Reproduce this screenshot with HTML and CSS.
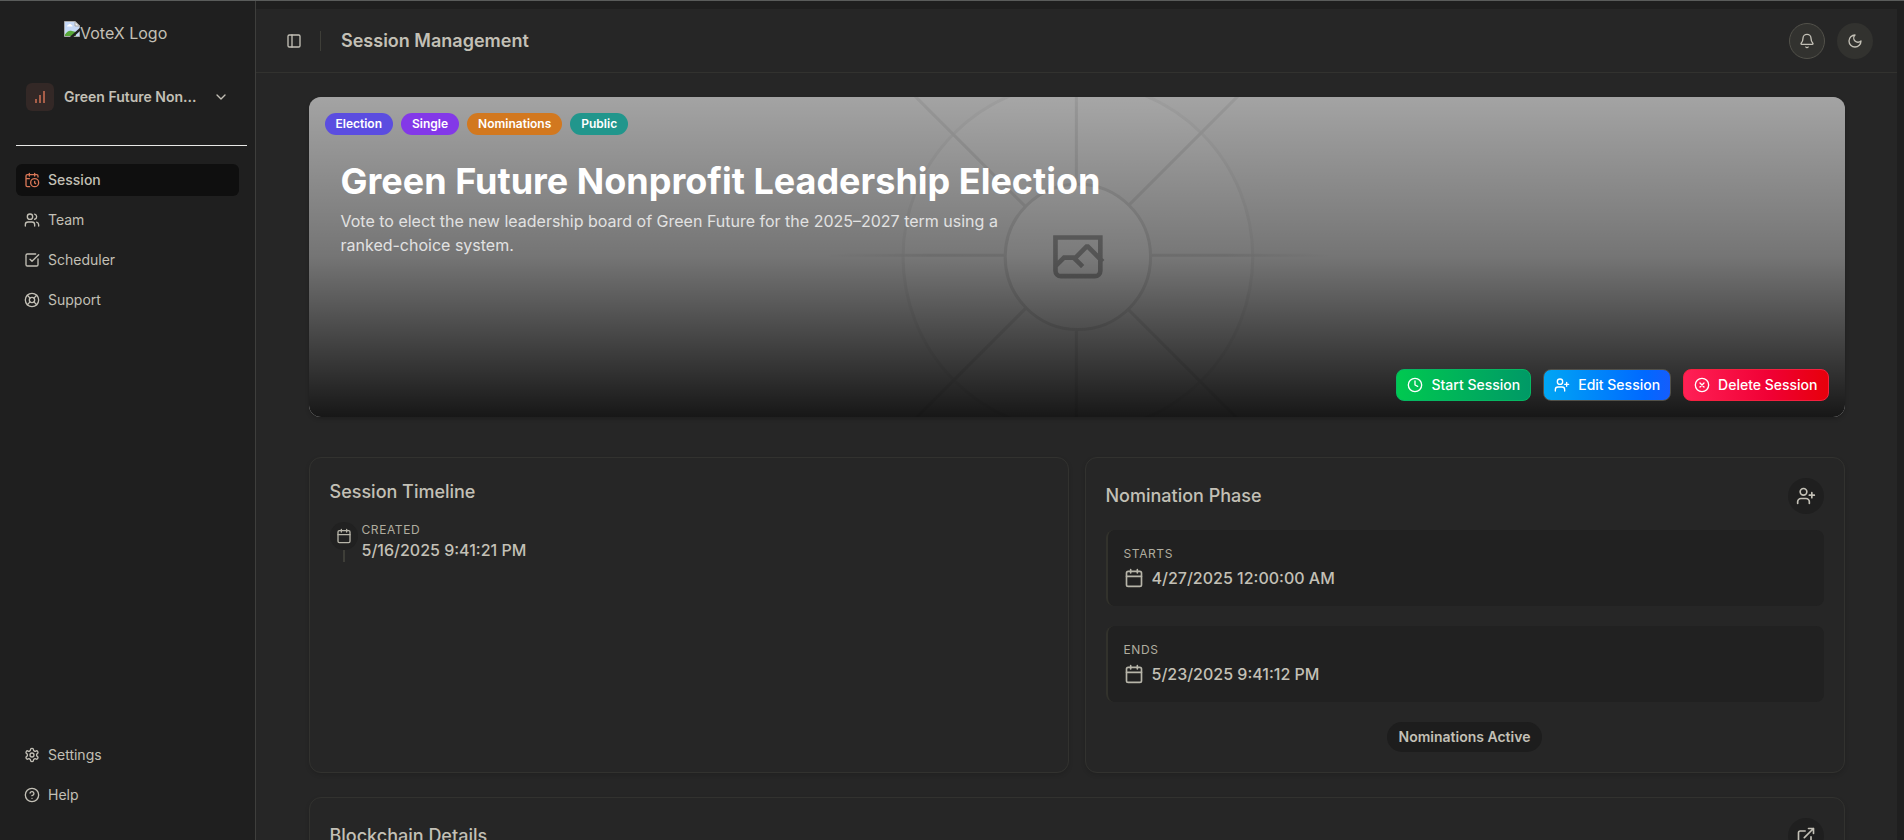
FILE: index.html
```html
<!DOCTYPE html>
<html lang="en">
<head>
<meta charset="utf-8">
<meta name="viewport" content="width=device-width, initial-scale=1">
<title>VoteX – Session Management</title>
<link rel="stylesheet" href="styles.css">
</head>
<body>
<svg class="defs" aria-hidden="true">
  <symbol id="i-calendar" viewBox="0 0 24 24"><path d="M8 2v4M16 2v4M3 10h18"/><rect x="3" y="4" width="18" height="18" rx="2"/></symbol>
  <symbol id="i-user-plus" viewBox="0 0 24 24"><path d="M16 21v-2a4 4 0 0 0-4-4H6a4 4 0 0 0-4 4v2"/><circle cx="9" cy="7" r="4"/><path d="M19 8v6M22 11h-6"/></symbol>
</svg>
<div class="shell">
  <aside class="sidebar">
    <a class="logo" href="#" aria-label="VoteX Logo">
      <svg width="16" height="16" viewBox="0 0 16 16" aria-hidden="true">
        <path fill="#c6d9f7" d="M.5.5h10.5l4.500 4.500v10.500H.5z"/>
        <path fill="#fff" d="M3 5.500a1.500 1.500 0 0 1 1.200-1.500 1.800 1.800 0 0 1 3.300 0 1.300 1.300 0 0 1 1 1.500z"/>
        <path fill="#57a639" d="M1 15v-1.500c2-3.500 4.500-4.500 7-3.500l4 1v4z"/>
        <path fill="none" stroke="#a8a8a8" d="M.5 15.500V.5h10.500l4.500 4.500v10.500z"/>
        <path fill="#f4f4f4" stroke="#a8a8a8" d="M11 .5V5h4.500z"/>
        <path stroke="#1f1f1f" stroke-width="2.500" d="M7 16.500l10-9"/>
      </svg><span>VoteX Logo</span>
    </a>
    <button class="team" type="button">
      <span class="team-icon"><svg class="icon" viewBox="0 0 24 24"><path d="M12 21V9M18 21V3M6 21v-6"/></svg></span>
      <span class="team-name">Green Future Non...</span>
      <svg class="icon" viewBox="0 0 24 24"><path d="m6 9 6 6 6-6"/></svg>
    </button>
    <hr class="rule">
    <nav class="nav" aria-label="Main">
      <a class="nav-item active" href="#"><svg class="icon" viewBox="0 0 24 24"><path d="M21 7.500V6a2 2 0 0 0-2-2H5a2 2 0 0 0-2 2v14a2 2 0 0 0 2 2h3.500M16 2v4M8 2v4M3 10h5M17.500 17.500 16 16.300V14"/><circle cx="16" cy="16" r="6"/></svg>Session</a>
      <a class="nav-item" href="#"><svg class="icon" viewBox="0 0 24 24"><path d="M16 21v-2a4 4 0 0 0-4-4H6a4 4 0 0 0-4 4v2"/><circle cx="9" cy="7" r="4"/><path d="M22 21v-2a4 4 0 0 0-3-3.870M16 3.130a4 4 0 0 1 0 7.750"/></svg>Team</a>
      <a class="nav-item" href="#"><svg class="icon" viewBox="0 0 24 24"><path d="M21 10.500V19a2 2 0 0 1-2 2H5a2 2 0 0 1-2-2V5a2 2 0 0 1 2-2h12.500M9 11l3 3L22 4"/></svg>Scheduler</a>
      <a class="nav-item" href="#"><svg class="icon" viewBox="0 0 24 24"><circle cx="12" cy="12" r="10"/><circle cx="12" cy="12" r="4"/><path d="m4.930 4.930 4.240 4.240M14.830 9.170l4.240-4.240M14.830 14.830l4.240 4.240M9.170 14.830l-4.240 4.240"/></svg>Support</a>
    </nav>
    <nav class="nav nav-bottom" aria-label="Secondary">
      <a class="nav-item" href="#"><svg class="icon" viewBox="0 0 24 24"><path d="M12.220 2h-.44a2 2 0 0 0-2 2v.18a2 2 0 0 1-1 1.730l-.43.25a2 2 0 0 1-2 0l-.15-.08a2 2 0 0 0-2.730.730l-.22.38a2 2 0 0 0 .73 2.730l.15.1a2 2 0 0 1 1 1.720v.51a2 2 0 0 1-1 1.740l-.15.09a2 2 0 0 0-.73 2.730l.22.38a2 2 0 0 0 2.730.73l.15-.08a2 2 0 0 1 2 0l.43.25a2 2 0 0 1 1 1.730V20a2 2 0 0 0 2 2h.44a2 2 0 0 0 2-2v-.18a2 2 0 0 1 1-1.730l.43-.25a2 2 0 0 1 2 0l.15.08a2 2 0 0 0 2.730-.73l.22-.39a2 2 0 0 0-.73-2.730l-.15-.08a2 2 0 0 1-1-1.740v-.5a2 2 0 0 1 1-1.740l.15-.09a2 2 0 0 0 .73-2.730l-.22-.38a2 2 0 0 0-2.730-.73l-.15.08a2 2 0 0 1-2 0l-.43-.25a2 2 0 0 1-1-1.730V4a2 2 0 0 0-2-2z"/><circle cx="12" cy="12" r="3"/></svg>Settings</a>
      <a class="nav-item" href="#"><svg class="icon" viewBox="0 0 24 24"><circle cx="12" cy="12" r="10"/><path d="M9.090 9a3 3 0 0 1 5.830 1c0 2-3 3-3 3M12 17h.01"/></svg>Help</a>
    </nav>
  </aside>

  <main class="main">
    <header class="topbar">
      <button class="trigger" type="button" aria-label="Toggle sidebar"><svg class="icon" viewBox="0 0 24 24"><rect x="3" y="3" width="18" height="18" rx="2"/><path d="M9 3v18"/></svg></button>
      <span class="divider"></span>
      <h1 class="page-title">Session Management</h1>
      <button class="round lined" type="button" aria-label="Notifications"><svg class="icon" viewBox="0 0 24 24"><path d="M10.268 21a2 2 0 0 0 3.464 0M3.262 15.326A1 1 0 0 0 4 17h16a1 1 0 0 0 .74-1.673C19.410 13.956 18 12.499 18 8A6 6 0 0 0 6 8c0 4.499-1.411 5.956-2.738 7.326"/></svg></button>
      <button class="round" type="button" aria-label="Toggle theme"><svg class="icon" viewBox="0 0 24 24"><path d="M12 3a6 6 0 0 0 9 9 9 9 0 1 1-9-9Z"/></svg></button>
    </header>

    <div class="content">
      <section class="hero">
        <svg class="hero-art" viewBox="0 0 1200 1200" preserveAspectRatio="xMidYMid slice" fill="none" aria-hidden="true">
          <defs>
            <linearGradient id="ray-h" gradientUnits="userSpaceOnUse" x1="404" y1="0" x2="797" y2="0"><stop stop-color="#c9c9c9" stop-opacity="0"/><stop offset=".208" stop-color="#c9c9c9"/><stop offset=".792" stop-color="#c9c9c9"/><stop offset="1" stop-color="#c9c9c9" stop-opacity="0"/></linearGradient>
            <linearGradient id="ray-v" gradientUnits="userSpaceOnUse" x1="0" y1="404" x2="0" y2="796"><stop stop-color="#c9c9c9" stop-opacity="0"/><stop offset=".208" stop-color="#c9c9c9"/><stop offset=".792" stop-color="#c9c9c9"/><stop offset="1" stop-color="#c9c9c9" stop-opacity="0"/></linearGradient>
          </defs>
          <rect width="1200" height="1200" fill="#eaeaea"/>
          <g opacity=".5">
            <circle cx="600.700" cy="599.900" r="136.600" fill="#fafafa" stroke="#c9c9c9" stroke-width="2.400" opacity=".5"/>
            <g stroke-width="2.400">
              <path stroke="url(#ray-h)" d="M404.800 598.700h391.700"/>
              <path stroke="url(#ray-v)" d="M599.500 795.700V404"/>
              <path stroke="url(#ray-v)" d="M795.700 796.600 404.300 405.200M404.300 795.700 795.700 404.300"/>
            </g>
            <circle cx="600.700" cy="599.900" r="56.800" fill="#fff"/>
            <path fill="#666" fill-rule="evenodd" d="M616.426 586.580h-31.434v16.176l3.553-3.554.531-.531h9.068l.074-.074 8.463-8.463h2.565l7.180 7.181V586.580Zm-15.715 14.654 3.698 3.699 1.283 1.282-2.565 2.565-1.282-1.283-5.200-5.199h-6.066l-5.514 5.514-.073.073v2.876a2.418 2.418 0 0 0 2.418 2.418h26.598a2.418 2.418 0 0 0 2.418-2.418v-8.317l-8.463-8.463-7.181 7.181-.071.072Zm-19.347 5.442v4.085a6.045 6.045 0 0 0 6.046 6.045h26.598a6.044 6.044 0 0 0 6.045-6.045v-7.108l1.356-1.355-1.282-1.283-.074-.073v-17.989h-38.689v23.430l-.146.146.146.147Z"/>
            <circle cx="600.700" cy="599.900" r="56.800" stroke="#c9c9c9" stroke-width="2.400"/>
          </g>
        </svg>
        <div class="hero-body">
          <div class="badges">
            <span class="badge indigo">Election</span>
            <span class="badge purple">Single</span>
            <span class="badge amber">Nominations</span>
            <span class="badge teal">Public</span>
          </div>
          <div class="hero-text">
            <h2>Green Future Nonprofit Leadership Election</h2>
            <p>Vote to elect the new leadership board of Green Future for the 2025–2027 term using a ranked-choice system.</p>
          </div>
          <div class="actions">
            <button class="btn start" type="button"><svg class="icon" viewBox="0 0 24 24"><circle cx="12" cy="12" r="10"/><path d="M12 6v6l4 2"/></svg>Start Session</button>
            <button class="btn edit" type="button"><svg class="icon"><use href="#i-user-plus"/></svg>Edit Session</button>
            <button class="btn delete" type="button"><svg class="icon" viewBox="0 0 24 24"><circle cx="12" cy="12" r="10"/><path d="m15 9-6 6M9 9l6 6"/></svg>Delete Session</button>
          </div>
        </div>
      </section>

      <div class="grid">
        <section class="card">
          <h3>Session Timeline</h3>
          <div class="event">
            <div class="marker">
              <span class="dot"><svg class="icon"><use href="#i-calendar"/></svg></span>
              <span class="stem"></span>
            </div>
            <div class="event-text">
              <div class="label">Created</div>
              <div class="date">5/16/2025 9:41:21 PM</div>
            </div>
          </div>
        </section>
        <section class="card">
          <div class="card-head">
            <h3>Nomination Phase</h3>
            <button class="round dark" type="button" aria-label="Add nominee"><svg class="icon large"><use href="#i-user-plus"/></svg></button>
          </div>
          <div class="phases">
            <div class="phase">
              <div class="label">Starts</div>
              <div class="date"><svg class="icon large"><use href="#i-calendar"/></svg>4/27/2025 12:00:00 AM</div>
            </div>
            <div class="phase">
              <div class="label">Ends</div>
              <div class="date"><svg class="icon large"><use href="#i-calendar"/></svg>5/23/2025 9:41:12 PM</div>
            </div>
            <span class="status">Nominations Active</span>
          </div>
        </section>
      </div>

      <section class="card">
        <div class="card-head">
          <h3>Blockchain Details</h3>
          <button class="round dark" type="button" aria-label="Open in explorer"><svg class="icon large" viewBox="0 0 24 24"><path d="M15 3h6v6M10 14 21 3M18 13v6a2 2 0 0 1-2 2H5a2 2 0 0 1-2-2V8a2 2 0 0 1 2-2h6"/></svg></button>
        </div>
      </section>
    </div>
  </main>
</div>
</body>
</html>
```

FILE: styles.css
```css
* { box-sizing: border-box; }

body {
  margin: 0;
  background: #1f1f1f;
  color: #c3c0b6;
  font: 14px/20px Inter, "Liberation Sans", sans-serif;
}

h1, h2, h3, p { margin: 0; }
button { font: inherit; color: inherit; border: 0; background: none; padding: 0; }
a { color: inherit; text-decoration: none; }

.defs { display: none; }

.icon {
  width: 16px;
  height: 16px;
  flex: none;
  fill: none;
  stroke: currentColor;
  stroke-width: 2;
  stroke-linecap: round;
  stroke-linejoin: round;
}
.icon.large { width: 20px; height: 20px; }

.shell {
  display: flex;
  height: 100vh;
  overflow: hidden;
  border-top: 1px solid #5a5c5b;
}

/* Sidebar */
.sidebar {
  display: flex;
  flex-direction: column;
  width: 256px;
  flex: none;
  padding: 20px 8px 29px 16px;
  border-right: 1px solid #3e3e3c;
}

.logo {
  display: flex;
  margin-left: 48px;
  font-size: 16px;
  line-height: 24px;
}

.team {
  display: flex;
  align-items: center;
  gap: 10px;
  margin: 38px 18px 34px 10px;
  text-align: left;
  font-weight: 600;
}
.team-icon {
  display: grid;
  place-items: center;
  width: 28px;
  height: 28px;
  border-radius: 6px;
  background: #332826;
  color: #a85e48;
}
.team-icon .icon { stroke-width: 3; stroke-linecap: butt; }
.team-name {
  flex: 1;
  white-space: nowrap;
}

.rule {
  width: 100%;
  margin: 0 0 18px;
  border: 0;
  border-top: 1px solid #e8e8e6;
}

.nav { display: flex; flex-direction: column; gap: 8px; margin-right: 8px; }
.nav-bottom { margin-top: auto; }
.nav-item {
  display: flex;
  align-items: center;
  gap: 8px;
  height: 32px;
  padding: 0 8px;
  border-radius: 6px;
}
.nav-item.active { background: #0f0f0f; font-weight: 500; }
.nav-item.active .icon { color: #d97757; }

/* Main */
.main {
  flex: 1;
  min-width: 0;
  margin: 8px 7px 0 0;
  background: #262626;
  overflow: hidden;
}

.topbar {
  display: flex;
  align-items: center;
  gap: 12px;
  height: 64px;
  padding: 0 24px;
  border-bottom: 1px solid #32322f;
}
.trigger { display: grid; place-items: center; width: 28px; height: 28px; }
.divider { width: 1px; height: 20px; background: #3e3e38; }
.page-title {
  flex: 1;
  padding-left: 8px;
  font-size: 18px;
  line-height: 28px;
  font-weight: 600;
}

.round {
  display: grid;
  place-items: center;
  flex: none;
  width: 36px;
  height: 36px;
  border-radius: 50%;
  background: #32322f;
}
.round.lined { border: 1px solid #52514a; }
.round.dark { background: #1f1f1f; }

.content {
  display: flex;
  flex-direction: column;
  gap: 24px;
  max-width: 1536px;
  margin: 24px auto;
}

/* Hero */
.hero {
  display: grid;
  min-height: 320px;
  margin-bottom: 16px;
  border-radius: 12px;
  overflow: hidden;
  box-shadow: 0 2px 4px #0003;
}
.hero > * { grid-area: 1 / 1; }
.hero-art { width: 100%; height: 100%; min-height: 0; contain: size; }
.hero-body {
  position: relative;
  display: flex;
  flex-direction: column;
  padding: 16px;
  background: linear-gradient(to top, #000000e6, #00000080, #0000004d);
}

.badges { display: flex; gap: 8px; }
.badge {
  padding: 3px 11px;
  border-radius: 11px;
  color: #fff;
  font-size: 12px;
  line-height: 16px;
  font-weight: 600;
}
.indigo { background: #5b4de0; }
.purple { background: #8338e8; }
.amber { background: #d2781f; }
.teal { background: #21968c; }

.hero-text { padding: 26px 16px 0; color: #fff; }
.hero-text h2 { font-size: 36px; line-height: 40px; font-weight: 700; }
.hero-text p {
  max-width: 672px;
  margin-top: 8px;
  color: #e2e2e2;
  font-size: 16px;
  line-height: 24px;
}

.actions { display: flex; justify-content: flex-end; gap: 12px; margin-top: auto; }
.btn {
  display: flex;
  align-items: center;
  gap: 8px;
  height: 32px;
  padding: 0 10px;
  border: 1px solid;
  border-radius: 8px;
  color: #fff;
  font-weight: 500;
}
.start { background: linear-gradient(to right, #00c950, #009966); border-color: #06b762; }
.edit { background: linear-gradient(to right, #00a6f4, #0069ff 80%, #155dfc); border-color: #52514a; }
.delete { background: linear-gradient(to right, #ff2056, #f00034 60%, #e7000b); border-color: #f5203f; }

/* Cards */
.grid { display: grid; grid-template-columns: 1fr 1fr; gap: 16px; }
.card {
  padding: 20px;
  border: 1px solid #32322f;
  border-radius: 12px;
  box-shadow: 0 2px 4px #0002;
}
.card h3 { font-size: 18px; line-height: 28px; font-weight: 500; }
.card-head { display: flex; align-items: center; justify-content: space-between; }

.label {
  color: #b0ad9f;
  font-size: 12px;
  line-height: 16px;
  letter-spacing: 0.6px;
  text-transform: uppercase;
}
.date {
  display: flex;
  align-items: center;
  gap: 8px;
  font-size: 16px;
  line-height: 24px;
  font-weight: 500;
}
.date .icon, .dot .icon { color: #b7b5a9; }

.event { display: flex; gap: 4px; margin-top: 16px; }
.marker { display: flex; flex-direction: column; align-items: center; }
.dot {
  display: grid;
  place-items: center;
  width: 28px;
  height: 28px;
  border-radius: 50%;
  background: #212121;
}
.stem { width: 2px; height: 12px; background: #3e3e38; }

.phases { display: flex; flex-direction: column; gap: 20px; margin-top: 16px; }
.phase {
  padding: 16px;
  border-left: 2px solid #32322c;
  border-radius: 8px;
  background: #212121;
}
.phase .date { margin-top: 4px; }
.status {
  align-self: center;
  padding: 5px 12px;
  border-radius: 15px;
  background: #1d1d1d;
  font-weight: 600;
}
```
